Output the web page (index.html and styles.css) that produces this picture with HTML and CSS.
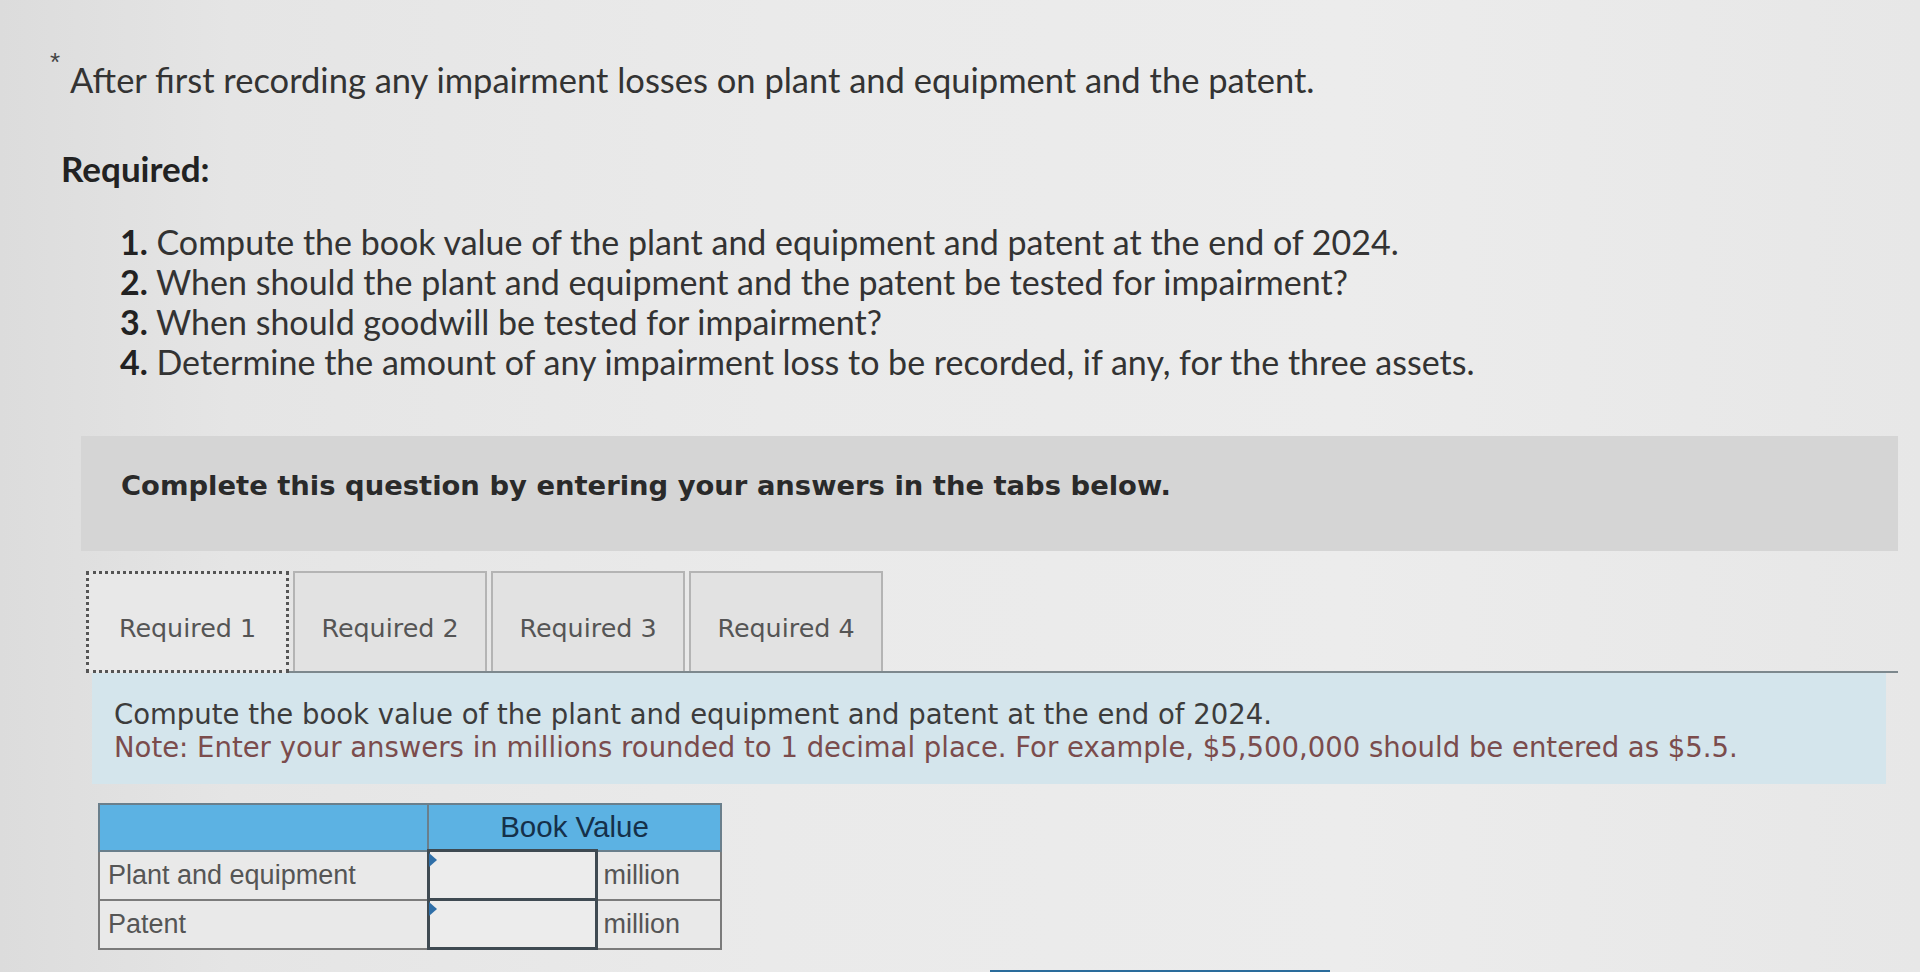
FILE: index.html
```html
<!DOCTYPE html>
<html lang="en">
<head>
<meta charset="utf-8">
<title>Impairment question</title>
<link rel="stylesheet" href="styles.css">
</head>
<body>
<div class="page">
  <div class="intro">
    <span class="star">*</span><p class="lead">After first recording any impairment losses on plant and equipment and the patent.</p>
  </div>
  <h2 class="req-title">Required:</h2>
  <ol class="req-list">
    <li><b>1.</b> Compute the book value of the plant and equipment and patent at the end of 2024.</li>
    <li><b>2.</b> When should the plant and equipment and the patent be tested for impairment?</li>
    <li><b>3.</b> When should goodwill be tested for impairment?</li>
    <li><b>4.</b> Determine the amount of any impairment loss to be recorded, if any, for the three assets.</li>
  </ol>

  <div class="banner">Complete this question by entering your answers in the tabs below.</div>

  <div class="tabs">
    <div class="tab active">Required 1</div>
    <div class="tab">Required 2</div>
    <div class="tab">Required 3</div>
    <div class="tab">Required 4</div>
  </div>

  <div class="instructions">
    <p class="ins-main">Compute the book value of the plant and equipment and patent at the end of 2024.</p>
    <p class="ins-note">Note: Enter your answers in millions rounded to 1 decimal place. For example, $5,500,000 should be entered as $5.5.</p>
  </div>

  <table class="answer">
    <thead>
      <tr><th class="blank"></th><th colspan="2">Book Value</th></tr>
    </thead>
    <tbody>
      <tr><td class="label">Plant and equipment</td><td class="inp"><span class="flag"></span></td><td class="unit">million</td></tr>
      <tr><td class="label">Patent</td><td class="inp"><span class="flag"></span></td><td class="unit">million</td></tr>
    </tbody>
  </table>

  <div class="bottom-row"><div class="bottom-bar"></div></div>
</div>
</body>
</html>
```

FILE: styles.css
```css
html, body {
  margin: 0;
  padding: 0;
}
body {
  width: 1920px;
  height: 972px;
  overflow: hidden;
  background: linear-gradient(90deg, #dcdcdc 0%, #e5e5e5 12%, #eaeaea 40%, #ececec 70%, #e7e7e7 100%);
  color: #333;
}
.page {
  padding: 50px 22px 0 0;
}
.intro {
  display: flex;
  align-items: flex-start;
  padding-left: 50px;
}
.star {
  font-family: "Liberation Sans", Arial, sans-serif;
  font-size: 26px;
  line-height: 24px;
  color: #444;
  width: 20px;
}
.lead {
  margin: 10px 0 0 0;
  font-family: Lato, "Open Sans", sans-serif;
  font-size: 34.5px;
  line-height: 40px;
  color: #333;
}
.req-title {
  margin: 48px 0 0 61px;
  font-family: Lato, "Open Sans", sans-serif;
  font-weight: 700;
  font-size: 35px;
  line-height: 40px;
  color: #222;
}
.req-list {
  list-style: none;
  margin: 34px 0 0 120px;
  padding: 0;
  font-family: Lato, "Open Sans", sans-serif;
  font-size: 34px;
  line-height: 40px;
  color: #333;
}
.req-list b {
  font-weight: 700;
  color: #222;
}
.banner {
  margin: 54px 0 0 81px;
  height: 115px;
  box-sizing: border-box;
  padding: 33px 0 0 40px;
  background: #d5d5d5;
  font-family: "DejaVu Sans", Verdana, sans-serif;
  font-weight: 700;
  font-size: 27.4px;
  line-height: 34px;
  color: #2a2a2a;
}
.tabs {
  margin: 20px 0 0 86px;
  display: flex;
  gap: 4px;
  border-bottom: 2px solid #7d888d;
  height: 100px;
}
.tab {
  width: 194px;
  box-sizing: border-box;
  border: 2px solid #b4b4b4;
  border-bottom: none;
  background: #e2e2e2;
  font-family: "DejaVu Sans", Verdana, sans-serif;
  font-size: 25.4px;
  color: #555;
  display: flex;
  align-items: center;
  justify-content: center;
  padding-top: 12px;
}
.tab.active {
  width: 203px;
  border: 3px dotted #555;
  background: #e8e8e8;
  margin-bottom: -2px;
}
.instructions {
  margin: 0 12px 0 92px;
  background: #d4e5ec;
  padding: 25px 0 20px 22px;
  font-family: "DejaVu Sans", Verdana, sans-serif;
  font-size: 27.5px;
  line-height: 33px;
}
.instructions p {
  margin: 0;
}
.ins-main {
  color: #3c3c3c;
}
.ins-note {
  color: #7b4c4c;
}
.answer {
  margin: 19px 0 0 98px;
  border-collapse: collapse;
  font-family: "Liberation Sans", Arial, sans-serif;
  font-size: 27px;
}
.answer th {
  background: #5cb2e3;
  height: 44px;
  padding: 0;
  border: 2px solid #6a7f8c;
  font-weight: 400;
  color: #15304a;
  font-size: 29.5px;
}
.answer td {
  height: 46px;
  border: 2px solid #7b7b7b;
  padding: 0;
  color: #555;
  background: #e9e9e9;
}
.answer .blank {
  width: 327px;
}
.answer .label {
  width: 327px;
  padding-left: 8px;
  box-sizing: border-box;
}
.answer .inp {
  width: 165px;
  border: 3px solid #3f4a52;
  position: relative;
  background: #ececec;
}
.answer .unit {
  width: 125px;
  padding-left: 6px;
  box-sizing: border-box;
}
.flag {
  position: absolute;
  left: -1px;
  top: 1px;
  width: 0;
  height: 0;
  border-top: 7px solid transparent;
  border-bottom: 7px solid transparent;
  border-left: 8px solid #2f6fa8;
}
.bottom-row {
  margin-top: 20px;
  padding-left: 990px;
}
.bottom-bar {
  width: 340px;
  height: 4px;
  background: #2a6c9c;
}
```
